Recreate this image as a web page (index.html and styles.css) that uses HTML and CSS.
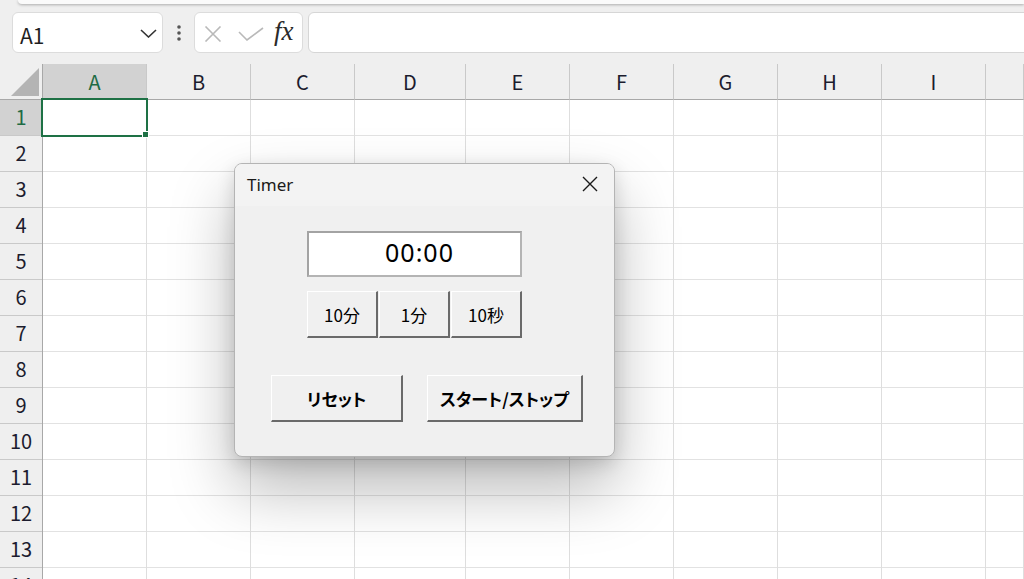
FILE: index.html
```html
<!DOCTYPE html>
<html lang="ja">
<head>
<meta charset="utf-8">
<title>Timer</title>
<link rel="stylesheet" href="styles.css">
</head>
<body>
<div class="app">
  <div class="ribbon-edge"></div>
  <div class="formula-bar">
    <div class="namebox">
      <span class="nb-text">A1</span>
      <svg class="chev" width="17" height="9" viewBox="0 0 17 9"><polyline points="1,1 8.5,8 16,1" fill="none" stroke="#333" stroke-width="1.6"/></svg>
    </div>
    <div class="dots">
      <svg width="6" height="16" viewBox="0 0 6 16"><circle cx="3" cy="2" r="1.8" fill="#555"/><circle cx="3" cy="8" r="1.8" fill="#555"/><circle cx="3" cy="14" r="1.8" fill="#555"/></svg>
    </div>
    <div class="fx-box">
      <svg class="ic-x" width="18" height="16" viewBox="0 0 18 16"><path d="M1.5 0.5 L16.5 15.5 M16.5 0.5 L1.5 15.5" stroke="#b9b9b9" stroke-width="1.6" fill="none"/></svg>
      <svg class="ic-check" width="26" height="14" viewBox="0 0 26 14"><polyline points="1,5 9,13 25,1" fill="none" stroke="#b9b9b9" stroke-width="1.6"/></svg>
      <span class="fx">fx</span>
    </div>
    <div class="formula-input"></div>
  </div>

  <div class="sheet">
    <div class="corner">
      <svg width="42" height="35" viewBox="0 0 42 35"><polygon points="11,32 39,32 39,4" fill="#b4b4b4"/></svg>
    </div>
    <div class="colhead sel">A</div>
    <div class="colhead">B</div>
    <div class="colhead">C</div>
    <div class="colhead">D</div>
    <div class="colhead">E</div>
    <div class="colhead">F</div>
    <div class="colhead">G</div>
    <div class="colhead">H</div>
    <div class="colhead">I</div>
    <div class="colhead"></div>

    <div class="rowheads">
      <div class="rowhead sel">1</div>
      <div class="rowhead">2</div>
      <div class="rowhead">3</div>
      <div class="rowhead">4</div>
      <div class="rowhead">5</div>
      <div class="rowhead">6</div>
      <div class="rowhead">7</div>
      <div class="rowhead">8</div>
      <div class="rowhead">9</div>
      <div class="rowhead">10</div>
      <div class="rowhead">11</div>
      <div class="rowhead">12</div>
      <div class="rowhead">13</div>
      <div class="rowhead">14</div>
    </div>
    <div class="col"></div>
    <div class="col"></div>
    <div class="col"></div>
    <div class="col"></div>
    <div class="col"></div>
    <div class="col"></div>
    <div class="col"></div>
    <div class="col"></div>
    <div class="col"></div>
    <div class="col"></div>

    <div class="selection"><div class="handle"></div></div>

    <div class="dialog">
      <div class="dlg-title">
        <span class="dlg-name">Timer</span>
        <svg class="dlg-close" width="16" height="16" viewBox="0 0 16 16"><path d="M1 1 L15 15 M15 1 L1 15" stroke="#1a1a1a" stroke-width="1.4" fill="none"/></svg>
      </div>
      <div class="dlg-body">
        <div class="timer-group">
          <div class="display">00:00</div>
          <div class="step-row">
            <button class="btn step">10分</button>
            <button class="btn step">1分</button>
            <button class="btn step">10秒</button>
          </div>
        </div>
        <div class="action-row">
          <button class="btn action reset">リセット</button>
          <button class="btn action start">スタート/ストップ</button>
        </div>
      </div>
    </div>
  </div>
</div>
</body>
</html>
```

FILE: styles.css
```css
* { box-sizing: border-box; }

html, body {
  margin: 0;
  padding: 0;
  width: 1024px;
  height: 579px;
  overflow: hidden;
  background: #efefef;
  font-family: "Noto Sans CJK JP", "Noto Sans", sans-serif;
}

.app {
  width: 1024px;
  height: 579px;
  display: flex;
  flex-direction: column;
  overflow: hidden;
}

.ribbon-edge {
  height: 4px;
  margin-left: 18px;
  background: #fafafa;
  border-bottom-left-radius: 6px;
  box-shadow: 0 1px 3px rgba(0, 0, 0, 0.28);
  flex: none;
}

.formula-bar {
  flex: none;
  height: 60px;
  padding: 8px 0 11px 12px;
  display: flex;
  align-items: stretch;
}

.namebox {
  width: 151px;
  background: #fff;
  border: 1px solid #dcdcdc;
  border-radius: 6px;
  display: flex;
  align-items: center;
  justify-content: space-between;
  padding: 0 5px 0 7px;
}

.nb-text {
  font-family: "Noto Sans CJK JP", sans-serif;
  font-size: 21px;
  color: #1f1f1f;
  margin-top: 4px;
}

.chev { margin-top: 2px; }

.dots {
  width: 10px;
  margin-left: 11px;
  display: flex;
  align-items: center;
  justify-content: center;
}

.fx-box {
  width: 109px;
  margin-left: 10px;
  background: #fff;
  border: 1px solid #dcdcdc;
  border-radius: 6px;
  display: flex;
  align-items: center;
  padding-left: 9px;
}

.ic-x { margin-top: 2px; }
.ic-check { margin-left: 16px; margin-top: 3px; }

.fx {
  font-family: "Liberation Serif", serif;
  font-style: italic;
  font-weight: normal;
  font-size: 27px;
  color: #2a2a2a;
  margin-left: 10px;
  margin-top: -3px;
  letter-spacing: 0;
}

.formula-input {
  flex: 1;
  margin-left: 5px;
  margin-right: -10px;
  background: #fff;
  border: 1px solid #d6d6d6;
  border-radius: 6px;
}

/* sheet */
.sheet {
  position: relative;
  flex: 1;
  display: grid;
  grid-template-columns: 43px 104px 104px 104px 111px 104px 104px 104px 104px 104px 1fr;
  grid-template-rows: 36px 1fr;
  background: #fff;
  overflow: hidden;
}

.corner {
  background: #efefef;
  border-right: 1px solid #a8a8a8;
  border-bottom: 1px solid #a8a8a8;
}
.corner svg { display: block; }

.colhead {
  background: #efefef;
  border-right: 1px solid #c9c9c9;
  border-bottom: 1px solid #a8a8a8;
  display: flex;
  align-items: center;
  justify-content: center;
  font-size: 20px;
  color: #1c1c2e;
}
.colhead.sel {
  background: #d2d2d2;
  color: #1f6b45;
}

.rowheads {
  background: #efefef;
  border-right: 1px solid #a8a8a8;
  display: flex;
  flex-direction: column;
}

.rowhead {
  flex: none;
  height: 36px;
  border-bottom: 1px solid #c9c9c9;
  display: flex;
  align-items: center;
  justify-content: center;
  font-size: 20px;
  color: #1c1c2e;
  padding-bottom: 3px;
}
.rowhead.sel {
  background: #d2d2d2;
  color: #1f6b45;
}

.col {
  border-right: 1px solid #dedede;
  background: repeating-linear-gradient(to bottom, transparent 0, transparent 35px, #e2e2e2 35px, #e2e2e2 36px);
}

.selection {
  position: absolute;
  left: 41px;
  top: 34px;
  width: 107px;
  height: 39px;
  border: 2px solid #1e7145;
}
.handle {
  position: absolute;
  right: -3px;
  bottom: -3px;
  width: 7px;
  height: 7px;
  background: #1e7145;
  border: 1px solid #fff;
}

/* dialog */
.dialog {
  position: absolute;
  left: 234px;
  top: 99px;
  width: 381px;
  height: 294px;
  background: #f0f0f0;
  border: 1px solid #b4b4b4;
  border-radius: 8px;
  box-shadow: 0 32px 64px rgba(0, 0, 0, 0.28), 0 6px 18px rgba(0, 0, 0, 0.14);
  overflow: hidden;
}

.dlg-title {
  height: 42px;
  background: #f3f3f3;
  display: flex;
  align-items: center;
  justify-content: space-between;
  padding: 0 16px 2px 12px;
}

.dlg-name {
  font-family: "Noto Sans", sans-serif;
  font-size: 17px;
  color: #1a1a1a;
}

.dlg-body {
  display: flex;
  flex-direction: column;
}

.timer-group {
  margin: 25px 0 0 72px;
  width: 215px;
  display: flex;
  flex-direction: column;
  gap: 14px;
}

.display {
  height: 46px;
  background: #fff;
  border: 2px solid #a3a3a3;
  border-right-color: #b4b4b4;
  border-bottom-color: #b4b4b4;
  display: flex;
  align-items: center;
  justify-content: center;
  font-family: "Noto Sans", sans-serif;
  font-size: 25px;
  letter-spacing: 1px;
  color: #000;
  padding: 0 0 5px 10px;
}

.step-row {
  display: flex;
  gap: 1px;
}

.btn {
  background: #f0f0f0;
  border-style: solid;
  border-width: 1px 2px 2px 1px;
  border-color: #ffffff #6a6a6a #6a6a6a #ffffff;
  font-family: "Noto Sans CJK JP", sans-serif;
  font-feature-settings: "palt";
  color: #000;
  padding: 0;
  margin: 0;
  display: flex;
  align-items: center;
  justify-content: center;
}

.step {
  width: 71px;
  height: 47px;
  font-size: 17px;
}

.action-row {
  margin: 37px 0 0 36px;
  display: flex;
  gap: 24px;
}

.action {
  height: 47px;
  font-size: 17px;
  font-weight: bold;
}
.reset { width: 132px; }
.start { width: 156px; }
```
